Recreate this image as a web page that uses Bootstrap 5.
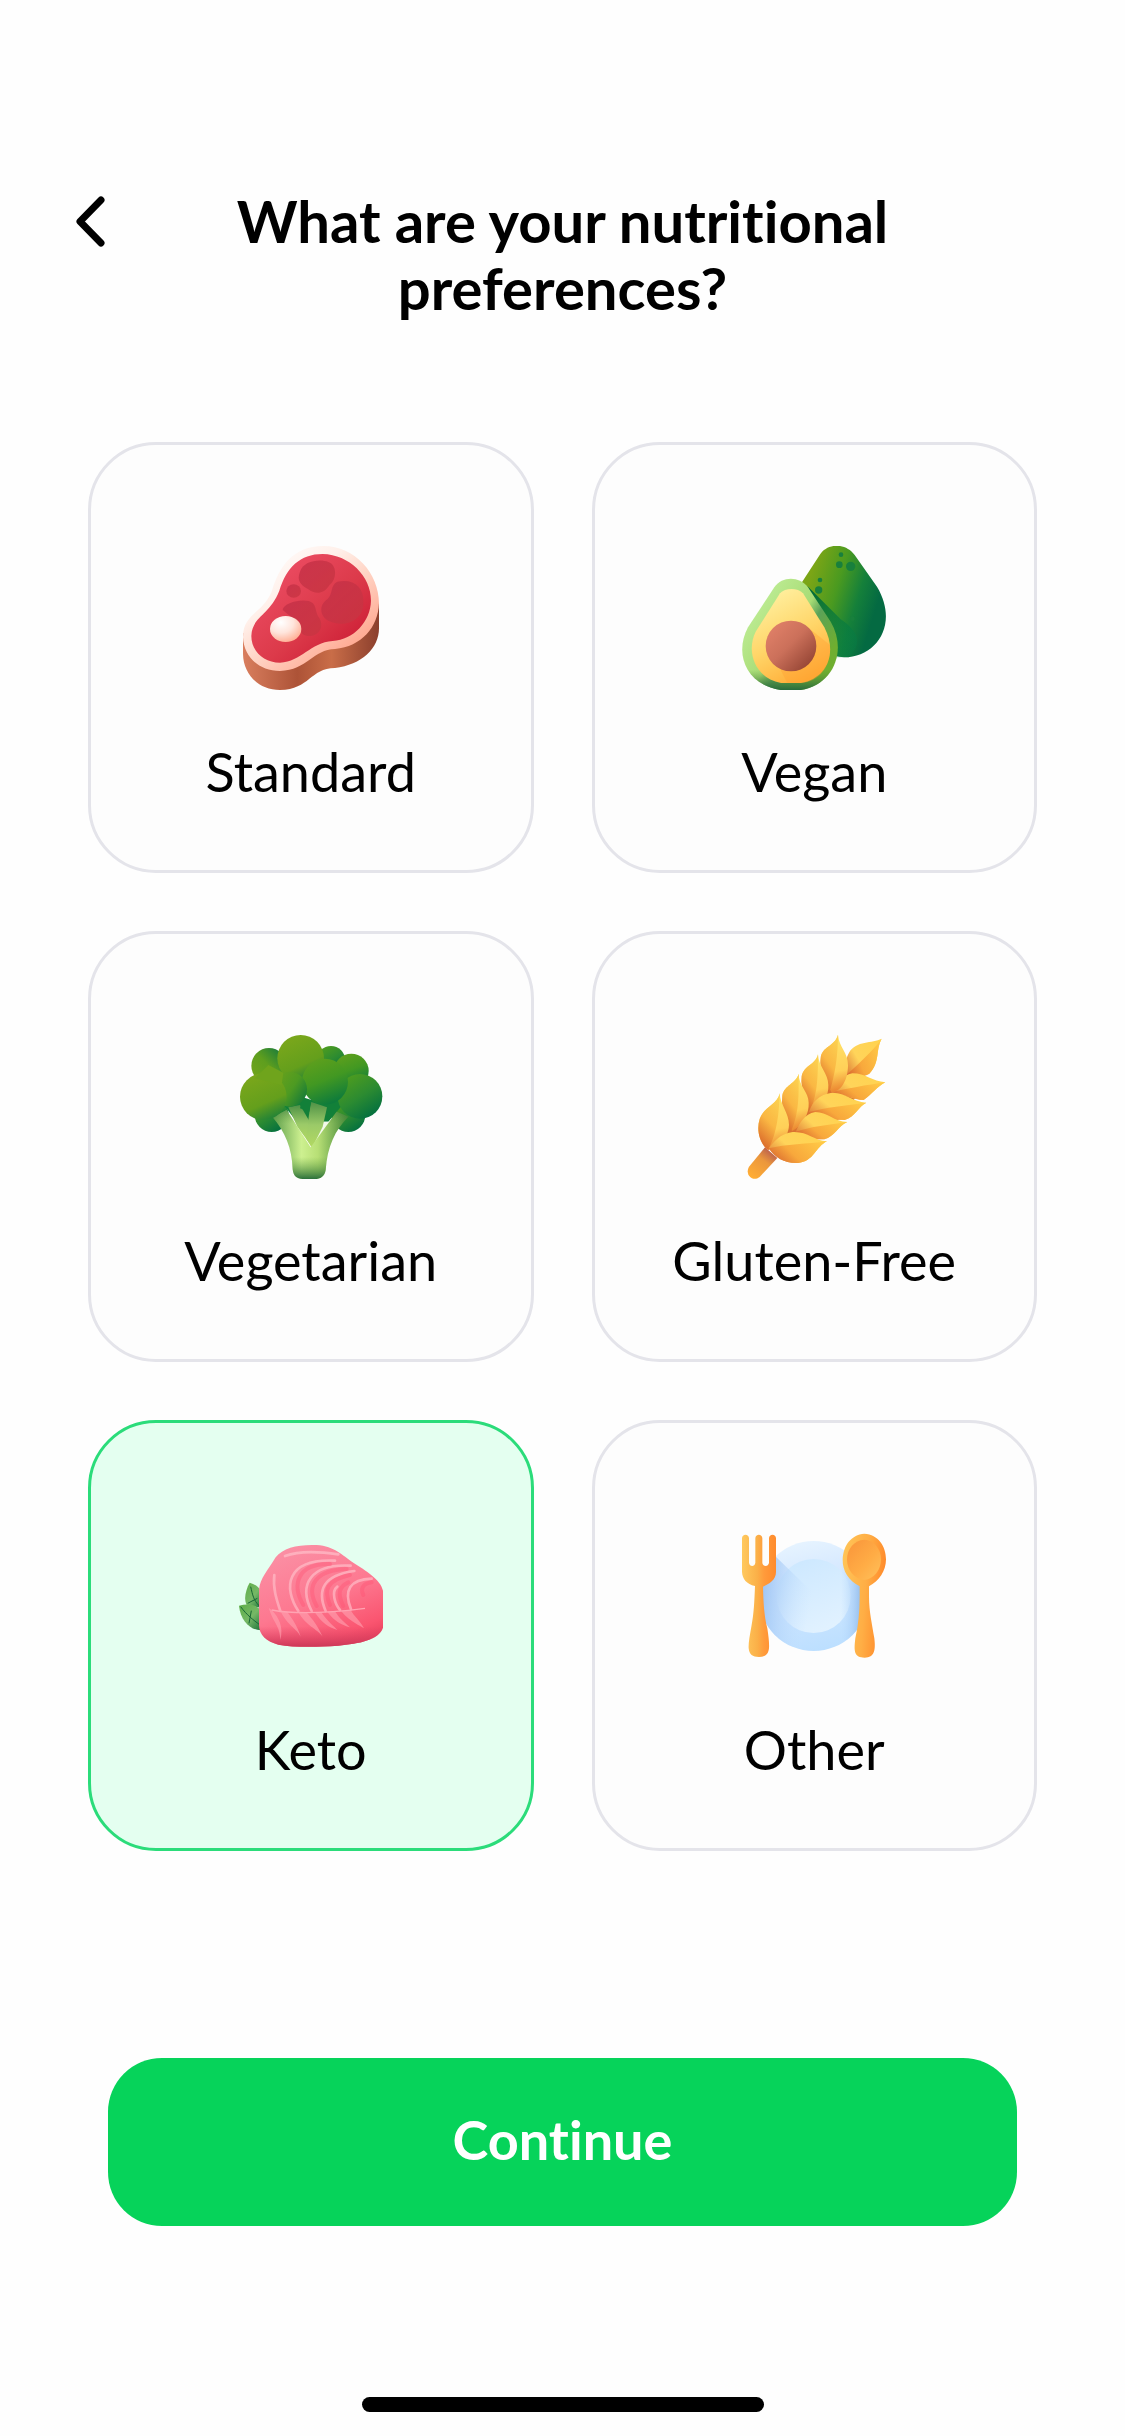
<!DOCTYPE html>
<html lang="en">
<head>
<meta charset="utf-8">
<meta name="viewport" content="width=device-width, initial-scale=1">
<title>Nutritional preferences</title>
<link rel="stylesheet" href="https://cdn.jsdelivr.net/npm/bootstrap@5.3.0/dist/css/bootstrap.min.css">
<style>
  body, .btn { font-variant-ligatures: none; }
  body { font-family: Lato, "Open Sans", sans-serif; color: #000; background: #fefefe; }
  .screen-head { display: grid; grid-template-columns: 58px 1fr 58px; align-items: start; padding: 187px 62px 121px; }
  .back-btn { padding: 6px 10px; line-height: 0; border: 0; }
  .back-btn svg { width: 38px; height: 56px; }
  .screen-title { font-size: 58px; line-height: 67px; font-weight: 700; max-width: 720px; }
  .choices { display: grid; grid-template-columns: 1fr 1fr; gap: 58px; padding: 0 88px; }
  .choice { display: flex; flex-direction: column; align-items: center; gap: 50px; padding: 101px 0 66px;
    border: 3px solid #e4e4ea; border-radius: 68px; background: #fdfdfd; color: #000;
    font-size: 54px; line-height: 64px; font-weight: 400; }
  .choice svg { width: 144px; height: 144px; }
  .btn-check:checked + .choice { background: #e4fff0; border-color: #2bdc7a; color: #000; }
  .cta { padding: 207px 108px 0; }
  .cta .btn { --bs-btn-bg: #06d35a; --bs-btn-hover-bg: #05c052; --bs-btn-active-bg: #05b04b; --bs-btn-color: #fff;
    --bs-btn-hover-color: #fff; --bs-btn-active-color: #fff;
    border: 0; border-radius: 54px; padding: 48px 50px 52px; font-size: 54px; line-height: 68px; font-weight: 700; }
  .home-bar { width: 402px; height: 15px; border-radius: 8px; background: #000; }
</style>
<script src="https://cdn.jsdelivr.net/npm/bootstrap@5.3.0/dist/js/bootstrap.bundle.min.js"></script>
</head>
<body>
<div class="d-flex flex-column min-vh-100">
  <header class="screen-head">
    <button type="button" class="btn back-btn" aria-label="Back">
      <svg viewBox="0 0 38 56" fill="none" stroke="#000" stroke-width="7" stroke-linecap="round" stroke-linejoin="round"><path d="M29 7 8 28.500 29 50"/></svg>
    </button>
    <h1 class="screen-title text-center mx-auto mb-0" id="question">What are your nutritional preferences?</h1>
  </header>

  <main class="choices" role="radiogroup" aria-labelledby="question">
    <div>
      <input class="btn-check" type="radio" name="diet" id="diet-standard">
      <label class="btn choice" for="diet-standard">
        <svg viewBox="57 48 432 432" aria-hidden="true">
          <defs>
            <linearGradient id="stSide" x1="0" x2="1" y1="0" y2="0"><stop offset="0" stop-color="#d97e5e"/><stop offset=".4" stop-color="#ad5337"/><stop offset=".65" stop-color="#c96d48"/><stop offset="1" stop-color="#8b3f2d"/></linearGradient>
            <linearGradient id="stFat" x1=".2" y1=".1" x2=".8" y2=".8"><stop offset="0" stop-color="#fffaf8"/><stop offset=".3" stop-color="#fff0ea"/><stop offset=".55" stop-color="#ffd8ca"/><stop offset="1" stop-color="#ffab94"/></linearGradient>
            <linearGradient id="stMeat" x1=".2" y1=".2" x2=".8" y2=".8"><stop offset="0" stop-color="#ea4a60"/><stop offset=".6" stop-color="#dc3a4a"/><stop offset="1" stop-color="#d0243a"/></linearGradient>
            <linearGradient id="stSpot" x1="0" y1="0" x2="1" y2="1"><stop offset="0" stop-color="#c43048"/><stop offset="1" stop-color="#c93642"/></linearGradient>
            <radialGradient id="stBone" cx=".35" cy=".25" r=".8"><stop offset="0" stop-color="#fff"/><stop offset=".5" stop-color="#ffe5dc"/><stop offset="1" stop-color="#ffad92"/></radialGradient>
          </defs>
          <path fill="url(#stSide)" d="M69 310V372C70 432 115 480 180 480C270 478 270 415 345 414C425 405 477 355 477 295V220Z"/>
          <path fill="url(#stFat)" d="M69 322C69 250 130 250 156 182C178 108 220 48 310 48C405 48 477 130 477 220C474 292 425 350 345 357C280 358 262 420 180 423C115 423 71 378 69 322Z"/>
          <path fill="url(#stMeat)" d="M94 318C96 258 148 258 178 182C200 112 240 72 308 72C388 74 453 138 453 212C451 275 402 328 338 333C270 338 245 395 180 398C130 398 94 362 94 318Z"/>
          <g fill="url(#stSpot)" opacity=".8"><path d="M240 125C250 92 300 86 325 96C350 104 353 145 328 166C312 193 285 194 265 178C240 165 230 150 240 125Z"/><path d="M352 155C400 145 432 170 430 218C432 270 375 295 328 274C296 258 298 223 322 208C340 190 330 166 352 155Z"/><path d="M188 240C190 215 260 202 278 219C290 231 286 250 298 264C314 292 296 320 262 318C240 314 242 302 237 280Z"/><ellipse cx="221" cy="183" rx="22" ry="20"/></g>
          <ellipse cx="197" cy="297" rx="47" ry="39" fill="url(#stBone)"/>
        </svg>
        <span>Standard</span>
      </label>
    </div>

    <div>
      <input class="btn-check" type="radio" name="diet" id="diet-vegan">
      <label class="btn choice" for="diet-vegan">
        <svg viewBox="69 78 432 432" aria-hidden="true">
          <defs>
            <linearGradient id="avBack" x1=".1" y1=".35" x2=".85" y2=".65"><stop offset="0" stop-color="#7ba516"/><stop offset=".4" stop-color="#4a9a20"/><stop offset=".72" stop-color="#15803a"/><stop offset="1" stop-color="#046a42"/></linearGradient>
            <linearGradient id="avSkin" x1=".15" y1=".2" x2=".85" y2=".75"><stop offset="0" stop-color="#bdec94"/><stop offset=".5" stop-color="#a8dc75"/><stop offset=".65" stop-color="#5ba258"/><stop offset="1" stop-color="#6fae30"/></linearGradient>
            <linearGradient id="avFoot" x1="0" y1="0" x2="0" y2="1"><stop offset=".82" stop-color="#57903c" stop-opacity="0"/><stop offset="1" stop-color="#286b3d"/></linearGradient>
            <linearGradient id="avFlesh" x1=".3" y1="0" x2=".75" y2="1"><stop offset="0" stop-color="#fff0a0"/><stop offset=".5" stop-color="#ffd568"/><stop offset="1" stop-color="#ffa831"/></linearGradient>
            <linearGradient id="avPit" x1=".1" y1=".1" x2=".85" y2=".85"><stop offset="0" stop-color="#e08068"/><stop offset=".5" stop-color="#cb705a"/><stop offset="1" stop-color="#9a4938"/></linearGradient>
            <linearGradient id="avShade" x1=".2" y1="0" x2=".8" y2="1"><stop offset="0" stop-color="#006b38"/><stop offset="1" stop-color="#048048" stop-opacity=".3"/></linearGradient>
          </defs>
          <path fill="url(#avBack)" d="M302 105C325 68 380 68 407 105L474 200C540 310 475 412 375 412C300 405 245 330 240 200Z"/>
          <path fill="url(#avShade)" d="M265 198L365 298C420 335 430 370 390 412H350Z"/>
          <g fill="#18803c"><circle cx="366" cy="104" r="7"/><circle cx="361" cy="134" r="10"/><circle cx="395" cy="139" r="14"/><circle cx="303" cy="180" r="7"/><circle cx="299" cy="210" r="11"/><circle cx="400" cy="296" r="7"/></g>
          <path fill="url(#avSkin)" d="M166 202C190 168 240 168 267 202L335 305C385 390 345 495 245 510H185C80 495 45 400 87 322Z"/>
          <path fill="url(#avFoot)" d="M166 202C190 168 240 168 267 202L335 305C385 390 345 495 245 510H185C80 495 45 400 87 322Z"/>
          <path fill="url(#avFlesh)" d="M183 220C198 203 237 203 252 220L316 322C358 402 320 477 246 489H186C108 475 80 395 110 335Z"/>
          <path fill="#ff9f30" opacity=".35" d="M270 325L333 375C337 440 300 486 246 489H205L185 450Z"/>
          <circle cx="216" cy="378" r="76" fill="url(#avPit)"/>
        </svg>
        <span>Vegan</span>
      </label>
    </div>

    <div>
      <input class="btn-check" type="radio" name="diet" id="diet-vegetarian">
      <label class="btn choice" for="diet-vegetarian">
        <svg viewBox="57 75 432 432" aria-hidden="true">
          <defs>
            <linearGradient id="brA" x1=".3" y1=".1" x2=".7" y2="1"><stop offset="0" stop-color="#78a61b"/><stop offset=".6" stop-color="#649f1c"/><stop offset="1" stop-color="#1c8039"/></linearGradient>
            <linearGradient id="brB" x1=".2" y1=".1" x2=".75" y2=".95"><stop offset="0" stop-color="#4b9b20"/><stop offset=".5" stop-color="#2c8b31"/><stop offset="1" stop-color="#04703f"/></linearGradient>
            <linearGradient id="brC" x1=".2" y1="0" x2=".6" y2="1"><stop offset="0" stop-color="#60a01c"/><stop offset=".5" stop-color="#429822"/><stop offset="1" stop-color="#0c7a3c"/></linearGradient>
            <linearGradient id="brD" x1=".1" y1=".2" x2="1" y2=".8"><stop offset="0" stop-color="#66a01c"/><stop offset=".5" stop-color="#4d9a22"/><stop offset="1" stop-color="#11783a"/></linearGradient>
            <linearGradient id="brE" x1="1" y1="0" x2="0" y2="1"><stop offset="0" stop-color="#087342"/><stop offset=".5" stop-color="#5e9e1e"/><stop offset="1" stop-color="#75a61a"/></linearGradient>
            <linearGradient id="brStem" x1="0" y1="0" x2="1" y2="0"><stop offset="0" stop-color="#5c9d4a"/><stop offset=".38" stop-color="#cdf090"/><stop offset=".6" stop-color="#b7df75"/><stop offset="1" stop-color="#3f8436"/></linearGradient>
            <linearGradient id="brFoot" x1="0" y1="0" x2="0" y2="1"><stop offset="0" stop-color="#2e7339" stop-opacity=".5"/><stop offset=".2" stop-color="#68a440" stop-opacity="0"/><stop offset=".68" stop-color="#68a440" stop-opacity="0"/><stop offset="1" stop-color="#2c713c"/></linearGradient>
            <linearGradient id="brTwig" x1="0" y1="0" x2="0" y2="1"><stop offset="0" stop-color="#4e9146"/><stop offset=".5" stop-color="#9bca68"/><stop offset="1" stop-color="#b4da62"/></linearGradient>
          </defs>
          <circle cx="155" cy="315" r="51" fill="url(#brB)"/><circle cx="385" cy="315" r="51" fill="url(#brB)"/>
          <path d="M180 270H380L325 335H230Z" fill="#128039"/>
          <path fill="#f2f9ea" d="M226 335H330L285 410Z"/>
          <path fill="url(#brTwig)" d="M205 292L240 285L278 350L268 400L232 350Z"/>
          <path fill="url(#brTwig)" d="M272 275L321 292L308 350L276 415L258 385Z"/>
          <path fill="url(#brStem)" d="M158 322L200 300L272 412L350 305L385 320C345 360 322 410 317 480C314 500 300 507 285 507H248C230 507 220 498 218 478C216 415 195 365 158 322Z"/>
          <path fill="url(#brFoot)" d="M158 322L200 300L272 412L350 305L385 320C345 360 322 410 317 480C314 500 300 507 285 507H248C230 507 220 498 218 478C216 415 195 365 158 322Z"/>
          <circle cx="333" cy="150" r="42" fill="url(#brB)"/>
          <circle cx="147" cy="167" r="53" fill="url(#brE)"/>
          <circle cx="394" cy="183" r="52" fill="url(#brC)"/>
          <circle cx="242" cy="145" r="70" fill="url(#brA)"/>
          <circle cx="420" cy="259" r="67" fill="url(#brB)"/>
          <circle cx="315" cy="215" r="69" fill="url(#brC)"/>
          <path fill="#128039" d="M248 262L275 270L268 305L240 295Z"/>
          <circle cx="209" cy="238" r="52" fill="url(#brD)"/>
          <circle cx="130" cy="260" r="70" fill="url(#brA)"/>
          <path fill="#6fa41c" d="M104 205L145 165L190 188L185 225Z"/>
        </svg>
        <span>Vegetarian</span>
      </label>
    </div>

    <div>
      <input class="btn-check" type="radio" name="diet" id="diet-gluten">
      <label class="btn choice" for="diet-gluten">
        <svg viewBox="39 75 432 432" aria-hidden="true">
          <defs>
            <linearGradient id="whV" x1=".4" y1="0" x2=".5" y2="1"><stop offset="0" stop-color="#ffe368"/><stop offset=".65" stop-color="#ffd058"/><stop offset="1" stop-color="#ea832f"/></linearGradient>
            <linearGradient id="whH" x1="1" y1=".2" x2="0" y2=".8"><stop offset="0" stop-color="#ffd34f"/><stop offset=".6" stop-color="#ffd45a"/><stop offset="1" stop-color="#df7d37"/></linearGradient>
            <linearGradient id="whD" x1=".7" y1="0" x2=".3" y2="1"><stop offset="0" stop-color="#fcd050"/><stop offset=".5" stop-color="#fab743"/><stop offset="1" stop-color="#d9662a"/></linearGradient>
            <linearGradient id="whR" x1="1" y1=".3" x2="0" y2=".7"><stop offset="0" stop-color="#ffc845"/><stop offset=".6" stop-color="#f8a83c"/><stop offset="1" stop-color="#d9682f"/></linearGradient>
            <linearGradient id="whS" x1=".9" y1="0" x2=".2" y2="1"><stop offset="0" stop-color="#a84b54"/><stop offset=".45" stop-color="#eb973c"/><stop offset="1" stop-color="#ffad35"/></linearGradient>
          </defs>
          <path fill="#d9742f" d="M300 190L365 180L390 250L320 340L250 380L150 400L190 330L240 240Z"/>
          <path fill="url(#whS)" d="M108 412L145 444L92 501C70 518 47 493 60 470Z"/>
          <path fill="url(#whH)" d="M458 86C430 101 382 90 360 128C345 155 350 175 345 202C380 205 410 195 421 191C455 154 439 120 458 86Z"/>
          <path fill="url(#whR)" d="M458 86C430 125 380 168 345 202C380 207 410 198 421 191C455 154 439 120 458 86Z"/>
          <path fill="url(#whH)" d="M469 217C430 214 410 190 370 190C340 195 320 220 305 245C340 250 375 270 404 270C432 250 444 230 469 217Z"/>
          <path fill="url(#whR)" d="M469 217C415 225 350 236 305 247C340 250 375 270 404 270C432 250 444 230 469 217Z"/>
          <path fill="url(#whV)" d="M327 74C318 110 278 108 275 145C270 185 290 230 310 247C342 242 357 202 357 166C357 125 330 114 327 74Z"/>
          <path fill="url(#whD)" d="M327 74C318 110 278 108 275 145C270 185 290 230 302 246C319 190 327 134 327 74Z"/>
          <path fill="url(#whV)" d="M267 133C260 165 225 165 218 199C213 240 235 280 251 300C280 280 300 260 298 225C298 190 269 172 267 133Z"/>
          <path fill="url(#whD)" d="M267 133C260 165 225 165 218 199C213 240 235 280 245 298C267 250 267 185 267 133Z"/>
          <path fill="url(#whH)" d="M412 278C370 275 350 247 309 248C270 253 250 275 240 306C275 320 310 330 347 330C380 320 388 289 412 278Z"/>
          <path fill="url(#whR)" d="M412 278C350 287 290 292 240 306C275 320 310 330 347 330C380 320 388 289 412 278Z"/>
          <path fill="url(#whV)" d="M209 191C202 220 165 225 160 257C155 300 170 345 190 363C223 345 241 310 239 278C239 245 209 228 209 191Z"/>
          <path fill="url(#whD)" d="M209 191C202 220 165 225 160 257C155 300 170 345 187 363C212 305 209 245 209 191Z"/>
          <path fill="url(#whH)" d="M355 336C315 335 295 306 259 306C225 312 212 340 200 365C225 385 260 388 286 388C317 380 327 348 355 336Z"/>
          <path fill="url(#whR)" d="M355 336C300 344 245 350 200 365C225 385 260 388 286 388C317 380 327 348 355 336Z"/>
          <path fill="url(#whV)" d="M152 250C145 285 105 290 92 327C80 365 96 405 118 420C155 405 180 377 180 344C180 310 154 285 152 250Z"/>
          <path fill="url(#whD)" d="M152 250C145 285 105 290 92 327C80 365 96 405 118 420C145 365 150 310 152 250Z"/>
          <path fill="url(#whH)" d="M294 394C255 392 237 364 191 366C151 372 135 395 119 415C140 445 169 461 207 459C255 455 260 410 294 394Z"/>
          <path fill="url(#whR)" d="M294 394C235 402 170 403 119 415C140 445 169 461 207 459C255 455 260 410 294 394Z"/>
        </svg>
        <span>Gluten-Free</span>
      </label>
    </div>

    <div>
      <input class="btn-check" type="radio" name="diet" id="diet-keto" checked>
      <label class="btn choice" for="diet-keto">
        <svg viewBox="57 12 432 432" aria-hidden="true">
          <defs>
            <linearGradient id="keBody" x1=".3" y1="0" x2=".8" y2="1"><stop offset="0" stop-color="#fb8fa4"/><stop offset=".5" stop-color="#fd7890"/><stop offset=".85" stop-color="#fa5570"/><stop offset="1" stop-color="#e7405c"/></linearGradient>
            <linearGradient id="keFoot" x1="0" y1="0" x2="0" y2="1"><stop offset=".8" stop-color="#e04466" stop-opacity="0"/><stop offset="1" stop-color="#cc3858"/></linearGradient>
            <linearGradient id="keLeaf" x1="0" y1="0" x2="1" y2="1"><stop offset="0" stop-color="#5fae48"/><stop offset=".5" stop-color="#75b866"/><stop offset="1" stop-color="#136b35"/></linearGradient>
            <linearGradient id="keLine" gradientUnits="userSpaceOnUse" x1="300" y1="80" x2="300" y2="350"><stop offset="0" stop-color="#ffc0ca" stop-opacity=".7"/><stop offset=".7" stop-color="#ffb0bd" stop-opacity=".8"/><stop offset="1" stop-color="#ff8fa2" stop-opacity=".3"/></linearGradient>
          </defs>
          <path fill="url(#keLeaf)" d="M89 188C115 195 135 215 130 265L80 255C70 235 78 208 89 188Z"/>
          <path fill="url(#keLeaf)" d="M57 257C90 248 120 255 130 285V330C95 335 62 305 57 257Z"/>
          <path stroke="#176735" stroke-width="3" fill="none" d="M92 200C98 225 100 240 118 258M62 260C80 285 100 300 120 315M83 250L112 235M87 310L94 272"/>
          <path fill="url(#keBody)" d="M117 210C119 175 145 150 167 112C190 82 235 73 290 75C345 79 365 105 400 128C440 154 490 182 490 222V320C480 360 420 371 355 377C285 382 220 382 175 374C140 365 117 345 117 315Z"/>
          <path fill="url(#keFoot)" d="M117 210C119 175 145 150 167 112C190 82 235 73 290 75C345 79 365 105 400 128C440 154 490 182 490 222V320C480 360 420 371 355 377C285 382 220 382 175 374C140 365 117 345 117 315Z"/>
          <path fill="none" stroke="url(#keLine)" stroke-width="8" stroke-linecap="round" d="M195 108C235 93 300 95 355 103M163 165C158 205 170 240 181 273M235 273C190 205 195 115 345 122M275 273C235 195 270 130 392 137M317 273C290 210 310 165 403 153M352 200C332 215 346 255 360 270M393 268C370 210 390 178 455 176"/>
          <path fill="none" stroke="#ff4e70" opacity=".35" stroke-width="12" stroke-linecap="round" d="M250 255C215 195 230 130 330 132M290 258C255 195 290 150 380 147M330 255C310 210 320 180 390 165M370 258C350 220 358 200 385 187M430 225C420 205 430 190 455 187"/>
          <path fill="none" stroke="#ffa4b3" stroke-width="4" d="M155 270C230 284 340 277 435 265"/>
          <path fill="#ffa2b1" opacity=".6" d="M146 263C160 310 180 315 181 360C192 320 175 292 158 273ZM181 273C205 320 230 325 242 350C230 310 214 295 202 275ZM235 277C260 320 290 325 308 350C290 310 278 300 261 278ZM284 277C305 308 325 322 352 330C330 308 320 300 304 277ZM322 276C345 305 365 315 390 322C365 300 355 290 346 275ZM363 273C395 310 420 315 432 325C420 300 402 290 392 270Z"/>
        </svg>
        <span>Keto</span>
      </label>
    </div>

    <div>
      <input class="btn-check" type="radio" name="diet" id="diet-other">
      <label class="btn choice" for="diet-other">
        <svg viewBox="69 42 432 432" aria-hidden="true">
          <defs>
            <linearGradient id="otRim" x1=".3" y1="0" x2=".55" y2="1"><stop offset="0" stop-color="#e7f4ff"/><stop offset=".3" stop-color="#d8eaff"/><stop offset="1" stop-color="#bcdfff"/></linearGradient>
            <linearGradient id="otIn" x1=".3" y1="0" x2=".7" y2="1"><stop offset="0" stop-color="#cde8ff"/><stop offset="1" stop-color="#e2f2ff"/></linearGradient>
            <linearGradient id="otShL" x1="0" y1="0" x2="1" y2=".25"><stop offset="0" stop-color="#8fbaf0"/><stop offset="1" stop-color="#c8e2ff" stop-opacity="0"/></linearGradient>
            <linearGradient id="otShR" x1="1" y1="0" x2="0" y2="0"><stop offset="0" stop-color="#8fb9ea"/><stop offset="1" stop-color="#b9dcff" stop-opacity="0"/></linearGradient>
            <linearGradient id="otFork" x1="0" y1="0" x2="1" y2="0"><stop offset="0" stop-color="#ffc95e"/><stop offset=".45" stop-color="#fbb048"/><stop offset=".65" stop-color="#ff9b3b"/><stop offset="1" stop-color="#ff8b2d"/></linearGradient>
            <linearGradient id="otSpoon" x1="0" y1=".2" x2="1" y2=".4"><stop offset="0" stop-color="#ffc457"/><stop offset=".55" stop-color="#ffae45"/><stop offset="1" stop-color="#ff8829"/></linearGradient>
            <linearGradient id="otBowl" x1="0" y1="0" x2=".9" y2="1"><stop offset="0" stop-color="#f9943a"/><stop offset=".6" stop-color="#ffac45"/><stop offset="1" stop-color="#ffbf59"/></linearGradient>
            <clipPath id="otClip"><circle cx="284" cy="258" r="165"/></clipPath>
          </defs>
          <circle cx="284" cy="258" r="165" fill="url(#otRim)"/>
          <circle cx="284" cy="258" r="111" fill="url(#otIn)"/>
          <g clip-path="url(#otClip)"><path fill="url(#otShL)" d="M165 135L284 250L240 425L120 370V180Z"/><path fill="url(#otShR)" d="M365 165H430V390H365Z"/></g>
          <path fill="url(#otFork)" d="M69 85C69 71 90 71 90 85V158C92 171 107 171 109 158V85C109 71 130 71 130 85V158C132 171 148 171 150 158V85C150 71 171 71 171 85V186C171 210 150 222 132 230C133 275 135 315 145 355C149 382 151 400 150 415C148 433 139 441 120 441C100 441 91 434 89 415C88 400 92 378 97 350C105 310 106 275 108 228C83 222 70 207 69 185Z"/>
          <path fill="url(#otSpoon)" d="M436 71C478 73 501 109 501 148C501 183 480 213 450 229V260C450 305 460 345 466 385C470 420 467 443 437 443C406 443 404 425 409 385C418 345 422 305 422 260V229C390 213 370 184 371 148C373 107 396 74 436 71Z"/>
          <path fill="url(#otBowl)" d="M436 89C465 91 486 116 486 148C486 179 465 208 436 210C405 207 384 181 384 148C384 116 406 91 436 89Z"/>
        </svg>
        <span>Other</span>
      </label>
    </div>
  </main>

  <div class="cta">
    <button type="button" class="btn w-100">Continue</button>
  </div>

  <div class="mt-auto d-flex justify-content-center pt-5 pb-4">
    <div class="home-bar"></div>
  </div>
</div>
</body>
</html>
